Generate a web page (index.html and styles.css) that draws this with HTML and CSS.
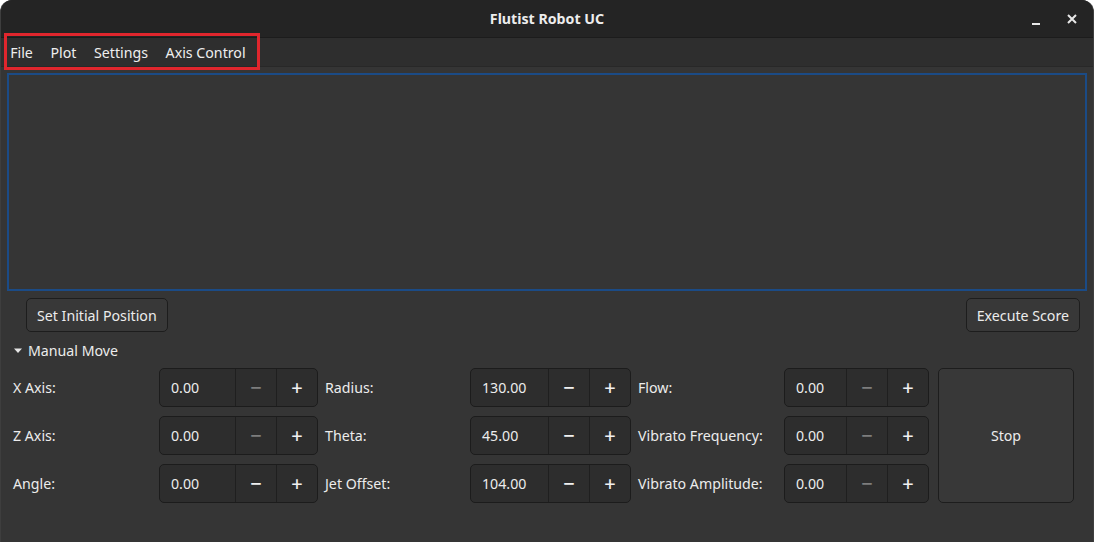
FILE: index.html
```html
<!DOCTYPE html>
<html>
<head>
<meta charset="utf-8">
<title>Flutist Robot UC</title>
<link rel="stylesheet" href="styles.css">
</head>
<body>
<div class="window">
  <header class="titlebar">
    <div class="title">Flutist Robot UC</div>
    <div class="wm-buttons">
      <button class="wm-btn" aria-label="Minimize">
        <svg width="16" height="16" viewBox="0 0 16 16"><rect x="4" y="12" width="8" height="2" fill="#e8e8e8"/></svg>
      </button>
      <button class="wm-btn" aria-label="Close">
        <svg width="16" height="16" viewBox="0 0 16 16"><path d="M4 4 L12 12 M12 4 L4 12" stroke="#e8e8e8" stroke-width="2"/></svg>
      </button>
    </div>
  </header>
  <nav class="menubar">
    <span class="menu-item">File</span>
    <span class="menu-item">Plot</span>
    <span class="menu-item">Settings</span>
    <span class="menu-item">Axis Control</span>
    <div class="highlight"></div>
  </nav>
  <main class="content">
    <div class="plot-frame"></div>
    <div class="action-row">
      <button class="btn">Set Initial Position</button>
      <button class="btn">Execute Score</button>
    </div>
    <div class="expander">
      <svg class="arrow" width="10" height="10" viewBox="0 0 10 10"><path d="M1 2.5 L9 2.5 L5 7 Z" fill="#e6e6e6"/></svg>
      <span>Manual Move</span>
    </div>
    <div class="manual">
      <div class="grid">
        <label class="lbl">X Axis:</label>
        <div class="spin"><span class="val">0.00</span><span class="sb dis">&minus;</span><span class="sb">+</span></div>
        <label class="lbl pad">Radius:</label>
        <div class="spin"><span class="val">130.00</span><span class="sb">&minus;</span><span class="sb">+</span></div>
        <label class="lbl pad">Flow:</label>
        <div class="spin"><span class="val">0.00</span><span class="sb dis">&minus;</span><span class="sb">+</span></div>

        <label class="lbl">Z Axis:</label>
        <div class="spin"><span class="val">0.00</span><span class="sb dis">&minus;</span><span class="sb">+</span></div>
        <label class="lbl pad">Theta:</label>
        <div class="spin"><span class="val">45.00</span><span class="sb">&minus;</span><span class="sb">+</span></div>
        <label class="lbl pad">Vibrato Frequency:</label>
        <div class="spin"><span class="val">0.00</span><span class="sb dis">&minus;</span><span class="sb">+</span></div>

        <label class="lbl">Angle:</label>
        <div class="spin"><span class="val">0.00</span><span class="sb">&minus;</span><span class="sb">+</span></div>
        <label class="lbl pad">Jet Offset:</label>
        <div class="spin"><span class="val">104.00</span><span class="sb">&minus;</span><span class="sb">+</span></div>
        <label class="lbl pad">Vibrato Amplitude:</label>
        <div class="spin"><span class="val">0.00</span><span class="sb dis">&minus;</span><span class="sb">+</span></div>
      </div>
      <button class="btn stop">Stop</button>
    </div>
  </main>
</div>
</body>
</html>
```
FILE: styles.css
```css
* { box-sizing: border-box; }
html, body {
  margin: 0;
  padding: 0;
  background: #ffffff;
}
body {
  font-family: "Noto Sans", "Open Sans", sans-serif;
  font-size: 14.2px;
  color: #ececec;
}
.window {
  width: 1094px;
  height: 542px;
  background: #353535;
  border-radius: 12px 12px 0 0;
  overflow: hidden;
  display: flex;
  flex-direction: column;
  border-right: 1px solid #3e3e3e;
  border-left: 1px solid #3e3e3e;
}
.titlebar {
  height: 38px;
  background: #242424;
  border-bottom: 1px solid #1c1c1c;
  position: relative;
  display: flex;
  align-items: center;
  justify-content: center;
  flex: none;
}
.title {
  font-weight: 700;
  font-size: 14.2px;
  color: #ededed;
}
.wm-buttons {
  position: absolute;
  right: 5px;
  top: 3px;
  display: flex;
  gap: 4px;
}
.wm-btn {
  width: 32px;
  height: 32px;
  border: 0;
  background: transparent;
  padding: 0;
  display: flex;
  align-items: center;
  justify-content: center;
}
.menubar {
  height: 29px;
  background: #2e2e2e;
  border-bottom: 1px solid #282828;
  display: flex;
  align-items: center;
  padding-left: 1px;
  position: relative;
  flex: none;
}
.menu-item {
  padding: 0 8.8px;
  font-size: 14.2px;
  color: #eeeeee;
}
.menu-item:first-of-type { padding-left: 8.2px; }
.highlight {
  position: absolute;
  left: 3px;
  top: -5px;
  width: 256px;
  height: 37px;
  border: 3px solid #e0262d;
  pointer-events: none;
}
.content {
  flex: 1;
  display: flex;
  flex-direction: column;
  padding: 6px 6px 0 6px;
}
.plot-frame {
  height: 218px;
  border: 2px solid #1b4b86;
  flex: none;
}
.action-row {
  display: flex;
  justify-content: space-between;
  margin-top: 7px;
  padding: 0 7px 0 19px;
}
.btn {
  font-family: inherit;
  font-size: 14.2px;
  color: #ececec;
  background: #383838;
  border: 1px solid #1d1d1d;
  border-radius: 5px;
  height: 34px;
  padding: 0 10px;
}
.expander {
  display: flex;
  align-items: center;
  gap: 5px;
  margin-top: 8px;
  padding-left: 6px;
  height: 20px;
  font-size: 14.2px;
}
.arrow { margin-top: 1px; }
.manual {
  display: flex;
  margin-top: 8px;
  padding-left: 6px;
  gap: 9px;
}
.grid {
  display: grid;
  grid-template-columns: 146px 159px 152px 161px 153px 145px;
  grid-auto-rows: 39px;
  row-gap: 9px;
}
.lbl {
  display: flex;
  align-items: center;
  font-size: 14.2px;
}
.lbl.pad { padding-left: 7px; }
.spin {
  display: flex;
  background: #2d2d2d;
  border: 1px solid #1c1c1c;
  border-radius: 5px;
  overflow: hidden;
}
.val {
  flex: 1;
  display: flex;
  align-items: center;
  padding-left: 11px;
  font-size: 14.2px;
}
.sb {
  width: 41px;
  flex: none;
  display: flex;
  align-items: center;
  justify-content: center;
  border-left: 1px solid #1f1f1f;
  font-size: 20px;
  font-weight: 500;
  color: #f0f0f0;
}
.sb.dis { color: #7d7d7d; }
.stop {
  width: 136px;
  height: 135px;
  background: #383838;
}
```
